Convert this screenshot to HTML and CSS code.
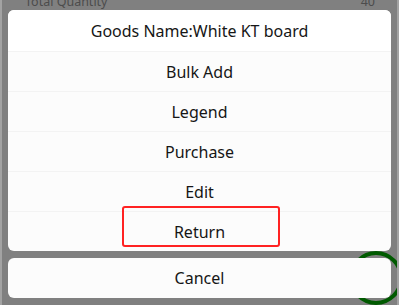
FILE: index.html
```html
<!DOCTYPE html>
<html lang="en">
  <head>
    <meta charset="UTF-8" />
    <meta name="viewport" content="width=device-width, initial-scale=1.0" />
    <title>Action Sheet</title>
    <link rel="stylesheet" href="styles.css">
  </head>
  <body>
    <div class="page">
      <div class="summary">
        <span>Total Quantity</span>
        <span>40</span>
      </div>
      <div class="fab"></div>
      <div class="sheet">
        <div class="menu">
          <div class="title">Goods Name:White KT board</div>
          <div class="item">Bulk Add</div>
          <div class="item">Legend</div>
          <div class="item">Purchase</div>
          <div class="item">Edit</div>
          <div class="item">Return</div>
          <div class="mark"></div>
        </div>
        <div class="cancel">Cancel</div>
      </div>
    </div>
  </body>
</html>
```

FILE: styles.css
```css
html, body {
  margin: 0;
  height: 100%;
}

body {
  font-family: "Noto Sans", "Open Sans", sans-serif;
  background-color: #a3a3a3;
  overflow: hidden;
}

.page {
  position: relative;
  margin: 0 2px;
  height: 100%;
  background-color: #808080;
  overflow: hidden;
}

.summary {
  display: flex;
  justify-content: space-between;
  padding: 0 22px 0 23px;
  margin-top: -7px;
  font-size: 12.5px;
  line-height: 17px;
  color: #4c4c4c;
}

.fab {
  position: absolute;
  right: -6px;
  bottom: 0;
  width: 54px;
  height: 54px;
  box-sizing: border-box;
  border: 4px solid #005a00;
  border-radius: 50%;
}

.sheet {
  position: relative;
  display: flex;
  flex-direction: column;
  gap: 7px;
  padding: 0 6px;
}

.menu {
  position: relative;
  background-color: #fcfcfc;
  border-radius: 6px;
  overflow: hidden;
}

.title,
.item,
.cancel {
  height: 40px;
  display: flex;
  align-items: center;
  justify-content: center;
  font-size: 16px;
  color: #161616;
}

.title {
  height: 41px;
  background-color: #fff;
}

.item {
  border-top: 1px solid #f3f3f3;
  height: 39px;
}

.cancel {
  background-color: #fcfcfc;
  border-radius: 6px;
}

.mark {
  position: absolute;
  left: 114px;
  top: 196px;
  width: 154px;
  height: 37px;
  border: 2px solid #ff2222;
  border-radius: 3px;
}
```
